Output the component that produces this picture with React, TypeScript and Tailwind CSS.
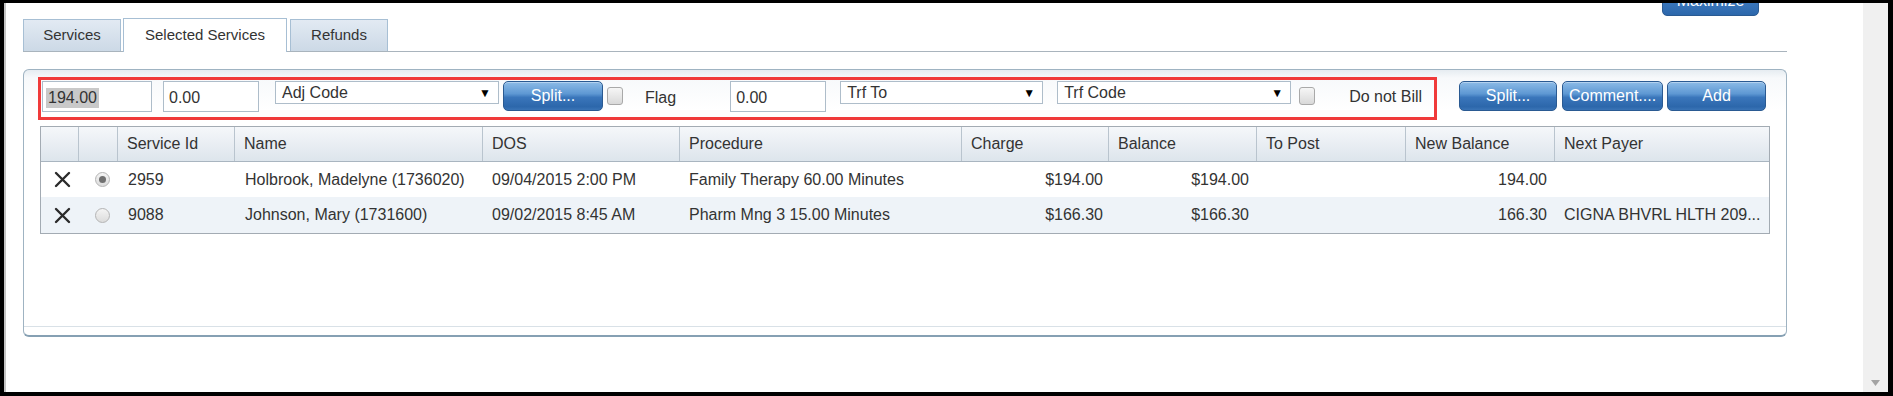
import React from "react";

const font = { fontFamily: '"Liberation Sans", Arial, sans-serif' };

function BlueButton({ label, w }: { label: string; w: string }) {
  return (
    <button
      className={`${w} h-[30px] rounded-[5px] border border-[#2a5a92] bg-[linear-gradient(to_bottom,#8cbbe7_0%,#5e98d3_42%,#3a76bb_55%,#2c67ab_88%,#3a74b6_100%)] text-white text-[16px] leading-none flex items-center justify-center shadow-[inset_0_1px_0_rgba(255,255,255,0.35)]`}
    >
      {label}
    </button>
  );
}

function Checkbox() {
  return (
    <div className="w-[16px] h-[18px] rounded-[3px] border border-[#a9a9a9] bg-[linear-gradient(to_bottom,#f6f6f6,#d9d9d9)]" />
  );
}

function Select({ label, w }: { label: string; w: string }) {
  return (
    <div
      className={`${w} h-[23px] self-start border border-[#aebdca] bg-white flex items-center justify-between pl-[6px] pr-[7px] text-[16px] text-[#333]`}
    >
      <span>{label}</span>
      <span className="text-[12px] text-black">▼</span>
    </div>
  );
}

function XIcon() {
  return (
    <svg width="17" height="17" viewBox="0 0 17 17">
      <path d="M2 2 L15 15 M15 2 L2 15" stroke="#2b2b2b" strokeWidth="2.4" strokeLinecap="round" />
    </svg>
  );
}

function Radio({ checked }: { checked?: boolean }) {
  return (
    <div className="w-[15px] h-[15px] rounded-full border border-[#b4b4b4] bg-[linear-gradient(to_bottom,#f4f4f4,#dcdcdc)] flex items-center justify-center">
      {checked && <div className="w-[7px] h-[7px] rounded-full bg-[#707070]" />}
    </div>
  );
}

const cols =
  "grid grid-cols-[38px_39px_117px_248px_197px_282px_147px_148px_149px_149px_214px]";

const headers = [
  "",
  "",
  "Service Id",
  "Name",
  "DOS",
  "Procedure",
  "Charge",
  "Balance",
  "To Post",
  "New Balance",
  "Next Payer",
];

const rows = [
  {
    checked: true,
    id: "2959",
    name: "Holbrook, Madelyne (1736020)",
    dos: "09/04/2015 2:00 PM",
    proc: "Family Therapy 60.00 Minutes",
    charge: "$194.00",
    balance: "$194.00",
    post: "",
    nb: "194.00",
    payer: "",
  },
  {
    checked: false,
    id: "9088",
    name: "Johnson, Mary (1731600)",
    dos: "09/02/2015 8:45 AM",
    proc: "Pharm Mng 3 15.00 Minutes",
    charge: "$166.30",
    balance: "$166.30",
    post: "",
    nb: "166.30",
    payer: "CIGNA BHVRL HLTH 209...",
  },
];

export default function App() {
  return (
    <div
      style={font}
      className="w-[1893px] h-[396px] bg-black pt-[3px] pl-[4px] pr-[5px] pb-[4px] flex overflow-hidden"
    >
      <div className="w-[2px] bg-[#c4c4c4]" />
      <div className="flex-1 bg-white relative overflow-hidden pt-[15px] pl-[17px]">
        {/* Maximize button (clipped) */}
        <div className="absolute left-[1656px] top-[-17px] w-[97px] h-[30px] rounded-[5px] border border-[#2a5a92] bg-[linear-gradient(to_bottom,#5e98d3_0%,#3a76bb_55%,#2c67ab_100%)] text-white text-[16px] flex items-center justify-center">
          Maximize
        </div>

        {/* Tabs */}
        <div className="w-[1764px] h-[34px] flex items-end border-b border-[#a9b4bd] text-[15px] text-[#333]">
          <div className="w-[98px] h-[32px] border border-b-0 border-[#a7bfd4] bg-[linear-gradient(to_bottom,#e2eaf3,#ccd9e6)] flex items-center justify-center">
            Services
          </div>
          <div className="ml-[2px] w-[164px] h-[34px] mb-[-1px] border border-b-0 border-[#a7bfd4] bg-white flex items-center justify-center">
            Selected Services
          </div>
          <div className="ml-[3px] w-[98px] h-[32px] border border-b-0 border-[#a7bfd4] bg-[linear-gradient(to_bottom,#e2eaf3,#ccd9e6)] flex items-center justify-center">
            Refunds
          </div>
        </div>

        {/* Panel */}
        <div className="relative mt-[17px] w-[1764px] h-[268px] rounded-[6px] border border-[#9fb3c2] border-b-2 border-b-[#86a0b3] bg-[linear-gradient(to_bottom,#e6ecf1_0px,#f7f9fb_8px,#ffffff_40px)] flex flex-col px-[16px] pt-[11px]">
          {/* Red annotation box */}
          <div className="absolute left-[14px] top-[7px] w-[1399px] h-[43px] border-[3px] border-[#f03a3a] pointer-events-none" />

          {/* Controls */}
          <div className="h-[31px] flex items-center pl-[2px] text-[16px] text-[#333]">
            <div className="w-[110px] h-[31px] border border-[#aebdca] bg-white flex items-center pl-[3px]">
              <span className="bg-[#c9c9c9] px-[2px] leading-[20px] mt-[2px]">194.00</span>
            </div>
            <div className="ml-[11px] w-[96px] h-[31px] border border-[#aebdca] bg-white flex items-center pl-[5px] pt-[2px]">
              0.00
            </div>
            <div className="ml-[16px] self-start">
              <Select label="Adj Code" w="w-[224px]" />
            </div>
            <div className="ml-[4px] self-start">
              <BlueButton label="Split..." w="w-[100px]" />
            </div>
            <div className="ml-[4px] self-start mt-[6px]">
              <Checkbox />
            </div>
            <div className="ml-[22px] pt-[3px]">Flag</div>
            <div className="ml-[54px] w-[96px] h-[31px] border border-[#aebdca] bg-white flex items-center pl-[5px] pt-[2px]">
              0.00
            </div>
            <div className="ml-[14px] self-start">
              <Select label="Trf To" w="w-[203px]" />
            </div>
            <div className="ml-[14px] self-start">
              <Select label="Trf Code" w="w-[234px]" />
            </div>
            <div className="ml-[8px] self-start mt-[6px]">
              <Checkbox />
            </div>
            <div className="ml-[34px] pt-[1px]">Do not Bill</div>
            <div className="ml-[37px] self-start flex">
              <BlueButton label="Split..." w="w-[98px]" />
              <div className="ml-[5px]">
                <BlueButton label="Comment...." w="w-[101px]" />
              </div>
              <div className="ml-[4px]">
                <BlueButton label="Add" w="w-[99px]" />
              </div>
            </div>
          </div>

          {/* Table */}
          <div className="mt-[14px] w-[1730px] border border-[#a3abb3] text-[16px] text-[#333]">
            <div
              className={`${cols} h-[35px] border-b border-[#a9b5c0] bg-[linear-gradient(to_bottom,#f5f7fa,#dde5ec)]`}
            >
              {headers.map((h, i) => (
                <div
                  key={i}
                  className={`flex items-center pl-[9px] ${i < headers.length - 1 ? "border-r border-[#b9c4ce]" : ""}`}
                >
                  {h}
                </div>
              ))}
            </div>
            {rows.map((r, i) => (
              <div
                key={i}
                className={`${cols} ${i === 0 ? "h-[35px] bg-white" : "h-[36px] bg-[#eef3f8]"}`}
              >
                <div className="flex items-center justify-center pl-[4px]">
                  <XIcon />
                </div>
                <div className="flex items-center justify-center pl-[8px]">
                  <Radio checked={r.checked} />
                </div>
                <div className="flex items-center pl-[10px]">{r.id}</div>
                <div className="flex items-center pl-[10px]">{r.name}</div>
                <div className="flex items-center pl-[9px]">{r.dos}</div>
                <div className="flex items-center pl-[9px]">{r.proc}</div>
                <div className="flex items-center justify-end pr-[6px]">{r.charge}</div>
                <div className="flex items-center justify-end pr-[8px]">{r.balance}</div>
                <div className="flex items-center justify-end pr-[8px]">{r.post}</div>
                <div className="flex items-center justify-end pr-[8px]">{r.nb}</div>
                <div className="flex items-center pl-[9px] whitespace-nowrap overflow-hidden">{r.payer}</div>
              </div>
            ))}
          </div>

          <div className="flex-1" />
          <div className="-mx-[16px] h-[9px] border-t border-[#d9e1e7]" />
        </div>
      </div>

      {/* Scrollbar */}
      <div className="w-[25px] bg-[#f0f0f0] flex flex-col justify-end items-center pb-[6px]">
        <svg width="9" height="6" viewBox="0 0 9 6">
          <path d="M0 0 L9 0 L4.5 6 Z" fill="#a3a3a3" />
        </svg>
      </div>
    </div>
  );
}
